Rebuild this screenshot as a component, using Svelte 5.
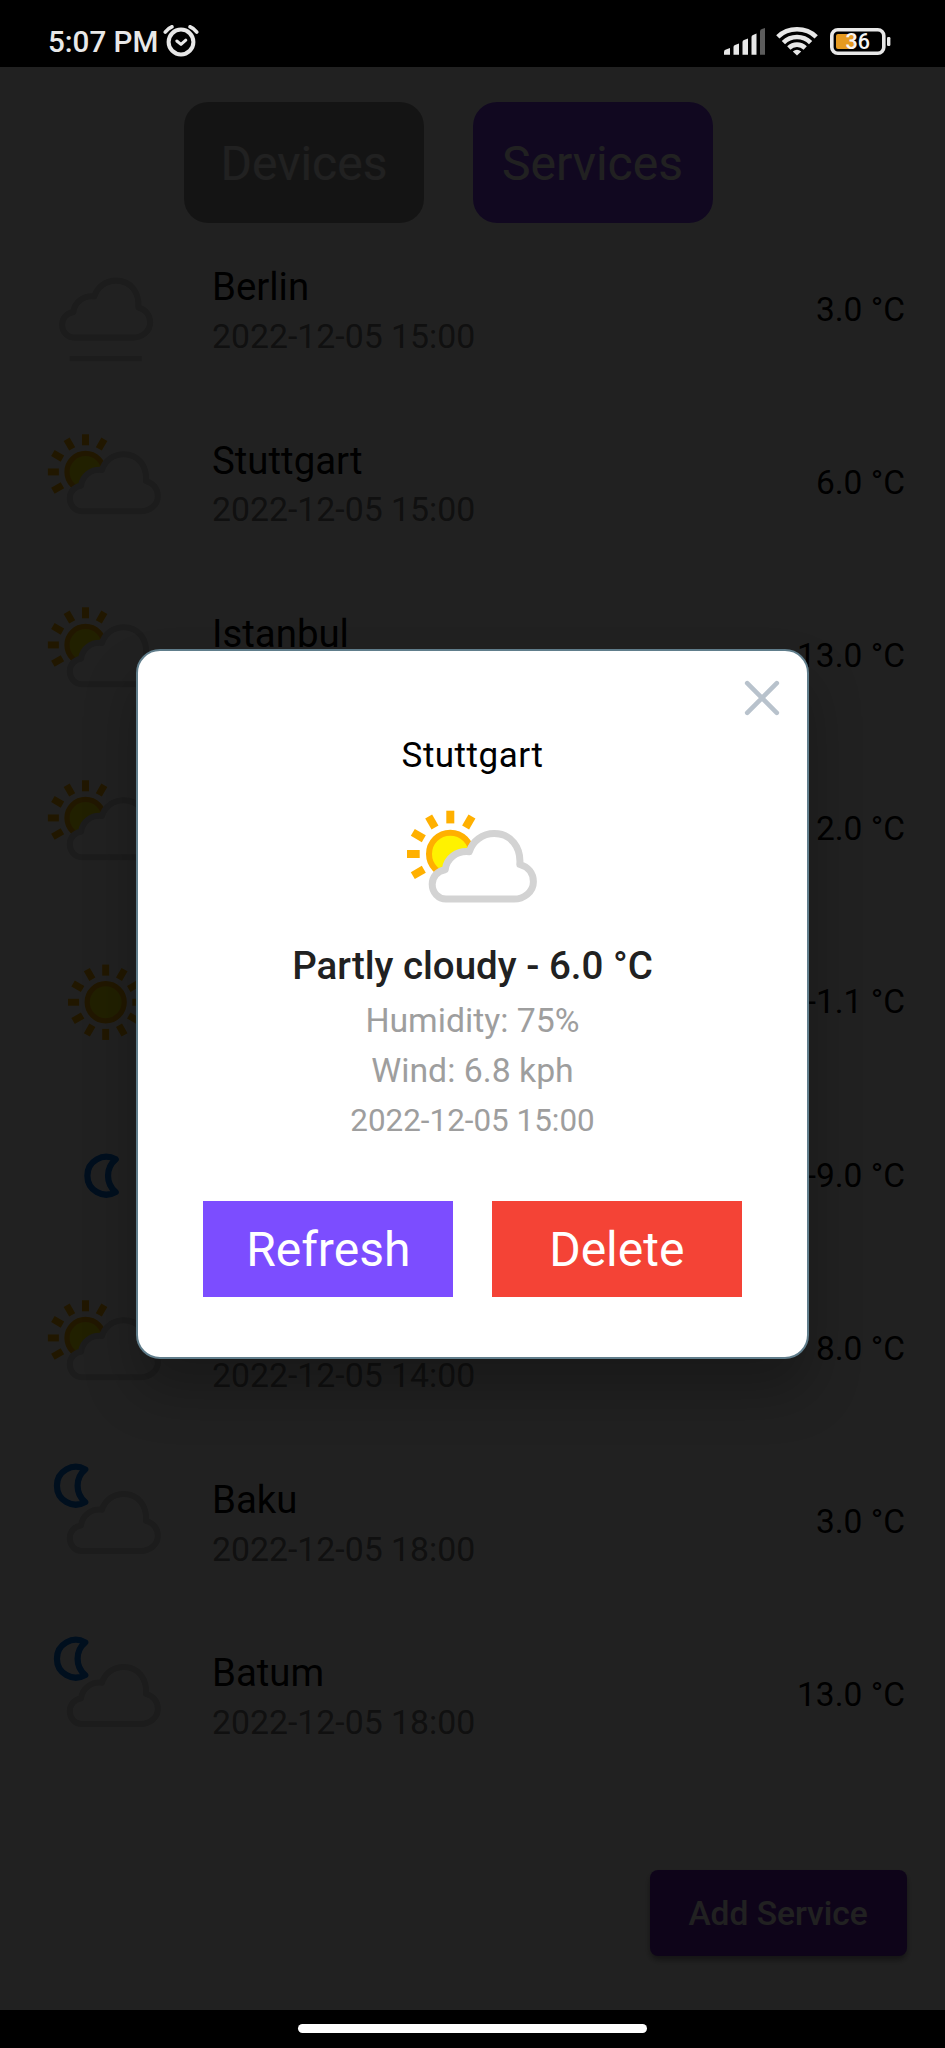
<script>
  const services = [
    { name: 'Berlin', time: '2022-12-05 15:00', temp: '3.0 °C', icon: 'fog' },
    { name: 'Stuttgart', time: '2022-12-05 15:00', temp: '6.0 °C', icon: 'partly' },
    { name: 'Istanbul', time: '', temp: '13.0 °C', icon: 'partly' },
    { name: '', time: '', temp: '2.0 °C', icon: 'partly' },
    { name: '', time: '', temp: '-1.1 °C', icon: 'sun' },
    { name: '', time: '', temp: '-9.0 °C', icon: 'moon' },
    { name: '', time: '2022-12-05 14:00', temp: '8.0 °C', icon: 'partly' },
    { name: 'Baku', time: '2022-12-05 18:00', temp: '3.0 °C', icon: 'moonCloud' },
    { name: 'Batum', time: '2022-12-05 18:00', temp: '13.0 °C', icon: 'moonCloud' }
  ];
  const rays = Array.from({ length: 12 }, (_, i) => i * 30);
  const partRays = [0, 30, 240, 270, 300, 330];
</script>

{#snippet sun(x, y, angles)}
  <g transform="translate({x} {y})">
    <circle r="21.3" fill="#fff200" stroke="#ffb000" stroke-width="6" />
    {#each angles as a}
      <path d="M0-30.6V-43.3" transform="rotate({a})" stroke="#ffb000" stroke-width="8" />
    {/each}
  </g>
{/snippet}

{#snippet moon(x, y)}
  <path transform="translate({x} {y})" d="M11.5-18.8A21.7 21.7 0 1 0 11.5 18.8A24.5 24.5 0 0 1 11.5-18.8Z"
    fill="none" stroke="#0072e8" stroke-width="7.2" stroke-linejoin="round" />
{/snippet}

{#snippet cloud(x, y)}
  <path transform="translate({x} {y})"
    d="M48 106.8H116C125.5 106.8 135.4 100 135.4 89.5C135.4 80.5 130 74.5 121.8 72.2C123.2 55 113 41.3 96.3 41.3C84.5 41.3 74.5 48.5 71.3 59.4C59 58 48.5 66 47.2 77.5C39.5 78.5 34.2 84.5 34.2 92C34.2 100.5 40.5 106.8 48 106.8Z"
    fill="#fff" stroke="#d3d3d3" stroke-width="7" stroke-linejoin="round" />
{/snippet}

{#snippet weather(kind)}
  <svg class="weather" viewBox="0 0 150 150">
    {#if kind === 'partly'}
      {@render sun(52.3, 62, partRays)}
      {@render cloud(0, 0.3)}
    {:else if kind === 'sun'}
      {@render sun(75.5, 75, rays)}
    {:else if kind === 'moon'}
      {@render moon(75.5, 75.5)}
    {:else if kind === 'moonCloud'}
      {@render moon(40.5, 33)}
      {@render cloud(0, 1.2)}
    {:else}
      {@render cloud(-8.8, 0.8)}
      <path d="M34 131.8H117" stroke="#d3d3d3" stroke-width="6" />
    {/if}
  </svg>
{/snippet}

<div class="screen">
  <header class="status">
    <span class="clock">5:07 PM</span>
    <svg class="alarm" width="38" height="36" viewBox="0 0 38 36" fill="none" stroke="#e8e8e8" stroke-linecap="round">
      <circle cx="19" cy="19" r="12.4" stroke-width="4" />
      <path d="M14.8 18L19 21.4L23.8 17.2" stroke-width="3" stroke-linejoin="round" />
      <path d="M3.2 9.2Q6.5 5 10 3.8M34.8 9.2Q31.5 5 28 3.8" stroke-width="3.6" />
    </svg>
    <span class="gap"></span>
    <svg width="42" height="28" viewBox="0 0 42 28" fill="#e8e8e8">
      <path d="M0 26.8V24Q0 22 2 21.6L6 20V26.8Z" />
      <path d="M9.5 26.8V19Q9.5 17.4 11 17L15 15.6V26.8Z" />
      <path d="M18.5 26.8V14Q18.5 12.4 20 12L24 10.6V26.8Z" />
      <path d="M27.5 26.8V9Q27.5 7.4 29 7L32.5 5.4V26.8Z" />
      <path d="M36 26.8V3.4Q36 1.4 38 1L41 0V26.8Z" fill="#5c5c5c" />
    </svg>
    <svg class="wifi" width="42" height="30" viewBox="0 0 42 30" fill="none" stroke="#e8e8e8" stroke-width="4.6">
      <path d="M1.8 10.8Q9.5 3.2 21 3.2T40.2 10.8" />
      <path d="M7.4 16.6Q13 11 21 11T34.6 16.6" />
      <path d="M12.8 22Q16.2 18.6 21 18.6T29.2 22" />
      <path d="M21 29.5L16.8 25.6Q21 22 25.2 25.6Z" fill="#e8e8e8" stroke="none" />
    </svg>
    <svg class="battery" width="61" height="28" viewBox="0 0 61 28">
      <rect x="1.8" y="1.8" width="52" height="23.4" rx="6" fill="none" stroke="#e8e8e8" stroke-width="3.6" />
      <rect x="6" y="6" width="18" height="15" rx="2" fill="#e69a20" />
      <rect x="57" y="9" width="3.4" height="9" rx="1.2" fill="#e8e8e8" />
      <text x="27.8" y="21.2" text-anchor="middle" fill="#f5f5f5">36</text>
    </svg>
  </header>

  <main class="app">
    <nav class="tabs">
      <button class="tab">Devices</button>
      <button class="tab active">Services</button>
    </nav>
    <ul class="list">
      {#each services as s}
        <li class="row">
          {@render weather(s.icon)}
          <div class="info">
            <div class="name">{s.name}</div>
            <div class="time">{s.time}</div>
          </div>
          <div class="temp">{s.temp}</div>
        </li>
      {/each}
    </ul>
    <button class="add">Add Service</button>
  </main>

  <footer class="nav"><span class="pill"></span></footer>

  <div class="overlay">
    <section class="modal">
      <svg class="close" width="38" height="38" viewBox="0 0 38 38" stroke="#b8c2cc" stroke-width="4.6" stroke-linecap="round">
        <path d="M4.2 4.2L33.8 33.8M33.8 4.2L4.2 33.8" />
      </svg>
      <div class="title">Stuttgart</div>
      {@render weather('partly')}
      <div class="condition">Partly cloudy - 6.0 °C</div>
      <div class="detail">Humidity: 75%</div>
      <div class="detail">Wind: 6.8 kph</div>
      <div class="stamp">2022-12-05 15:00</div>
      <div class="actions">
        <button class="refresh">Refresh</button>
        <button class="delete">Delete</button>
      </div>
    </section>
  </div>
</div>

<style>
  :global(body) { background: #000; }
  .screen {
    position: relative;
    display: flex;
    flex-direction: column;
    width: 945px;
    height: 2048px;
    overflow: hidden;
    background: #000;
    font-family: Roboto, sans-serif;
    color: #000;
  }
  .screen * { box-sizing: border-box; }
  button { border: 0; padding: 0; margin: 0; font-family: inherit; display: block; }
  svg { display: block; flex: none; }

  .status {
    display: flex;
    align-items: flex-start;
    height: 66.5px;
    flex: none;
    padding: 28px 54px 0 48px;
    color: #e8e8e8;
  }
  .clock { font-size: 29.6px; font-weight: 500; line-height: 29px; white-space: nowrap; }
  .alarm { margin: -5px 0 0 4px; }
  .gap { flex: 1; }
  .wifi { margin: -2px 0 0 10px; }
  .battery { margin-left: 12px; }
  .battery text { font: 500 21.5px Roboto, sans-serif; }

  .app {
    display: flex;
    flex-direction: column;
    height: 1943px;
    background: #fff;
  }
  .tabs { display: flex; gap: 48.5px; padding: 35.5px 0 0 184px; }
  .tab {
    width: 240px;
    height: 121px;
    border-radius: 24px;
    background: #9e9e9e;
    color: #fff;
    font-size: 48px;
    line-height: 123px;
  }
  .tab.active { background: #8040f8; }
  .list { list-style: none; margin: 0; padding: 0; }
  .row {
    display: flex;
    align-items: center;
    height: 173.23px;
    padding: 0 40px 0 40px;
  }
  .row .weather { width: 130.5px; height: 130.5px; }
  .info { flex: 1; margin-left: 41.5px; height: 108px; }
  .name { height: 50px; font-size: 38.4px; line-height: 50px; margin-top: 6.7px; }
  .time { height: 44px; margin-top: 2.7px; font-size: 33.8px; line-height: 44px; color: #7a7a7a; }
  .temp { font-size: 33.5px; line-height: 44px; }
  .add {
    align-self: flex-end;
    width: 257px;
    height: 86px;
    margin: 88px 38.5px 0 0;
    border-radius: 8px;
    background: #6a22c0;
    color: #fff;
    font-size: 33.5px;
    font-weight: 500;
    line-height: 88px;
    box-shadow: 0 4px 6px rgba(0, 0, 0, 0.4);
  }
  .nav { flex: 1; display: flex; justify-content: center; align-items: flex-start; padding-top: 14.5px; }
  .pill { width: 349px; height: 9px; border-radius: 5px; background: #fff; }

  .overlay {
    position: absolute;
    left: 0;
    top: 66.5px;
    width: 945px;
    height: 1943px;
    display: flex;
    justify-content: center;
    align-items: flex-start;
    padding-top: 582.8px;
    background: rgba(0, 0, 0, 0.87);
  }
  .modal {
    display: flex;
    flex-direction: column;
    align-items: center;
    width: 673px;
    height: 710px;
    padding-top: 28px;
    border: 2.5px solid #607d8b;
    border-radius: 24px;
    background: #fff;
    box-shadow: 0 32px 52px rgba(0, 0, 0, 0.25);
    text-align: center;
    white-space: nowrap;
  }
  .close { align-self: flex-end; margin-right: 26px; }
  .title { margin-top: 16px; font-size: 35px; line-height: 46px; letter-spacing: 0.5px; }
  .modal .weather { width: 150px; height: 150px; margin-top: 12.5px; }
  .condition { margin-top: -1px; height: 50px; line-height: 50px; font-size: 38.5px; font-weight: 500; color: #212121; }
  .detail { height: 50.6px; line-height: 50.6px; font-size: 33.8px; color: #9e9e9e; }
  .condition + .detail { margin-top: 4.8px; }
  .stamp { height: 48px; line-height: 48px; margin-top: -0.2px; font-size: 31.4px; color: #9e9e9e; }
  .actions { display: flex; gap: 38.5px; margin-top: 56px; }
  .actions button { width: 250px; height: 96px; font-size: 48px; line-height: 98px; color: #fff; }
  .refresh { background: #7c4dff; }
  .delete { background: #f44336; }
</style>
